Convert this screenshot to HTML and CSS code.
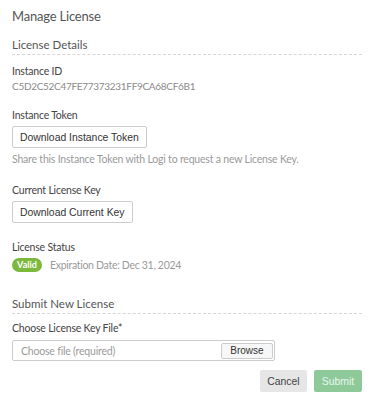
FILE: index.html
```html
<!DOCTYPE html>
<html>
<head>
<meta charset="utf-8">
<link rel="stylesheet" href="styles.css">
</head>
<body>
<div class="panel">
  <h1 class="title">Manage License</h1>
  <h2 class="section">License Details</h2>
  <div class="label label-first">Instance ID</div>
  <div class="value">C5D2C52C47FE77373231FF9CA68CF6B1</div>

  <div class="label label-token">Instance Token</div>
  <button class="btn">Download Instance Token</button>
  <div class="help">Share this Instance Token with Logi to request a new License Key.</div>

  <div class="label label-key">Current License Key</div>
  <button class="btn">Download Current Key</button>

  <div class="label label-status">License Status</div>
  <div class="status">
    <span class="badge">Valid</span>
    <span class="expiry">Expiration Date: Dec 31, 2024</span>
  </div>

  <h2 class="section section-second">Submit New License</h2>
  <div class="label label-file">Choose License Key File*</div>
  <div class="file">
    <span class="placeholder">Choose file (required)</span>
    <button class="browse">Browse</button>
  </div>
  <div class="actions">
    <button class="btn-cancel">Cancel</button>
    <button class="btn-submit">Submit</button>
  </div>
</div>
</body>
</html>
```

FILE: styles.css
```css
html, body {
  margin: 0;
  padding: 0;
  background: #ffffff;
}
body {
  font-family: Lato, "Open Sans", sans-serif;
  color: #555;
}
.panel {
  width: 350px;
  padding: 7px 12px 0 12px;
}
.title {
  margin: 0;
  font-size: 13px;
  font-weight: normal;
  color: #555;
  line-height: 18px;
  letter-spacing: -0.2px;
}
.section {
  margin: 13px 0 0 0;
  font-size: 11.5px;
  font-weight: normal;
  color: #555;
  line-height: 14px;
  padding-bottom: 2px;
  border-bottom: 1px dashed #d6d6d6;
}
.section-second {
  margin-top: 25px;
}
.label {
  font-size: 10.5px;
  letter-spacing: -0.2px;
  color: #444;
  line-height: 13px;
}
.label-first { margin-top: 10px; }
.label-token { margin-top: 16px; }
.label-key { margin-top: 18px; }
.label-status { margin-top: 18px; }
.label-file { margin-top: 8px; }
.value {
  font-size: 10px;
  color: #8a8a8a;
  line-height: 13px;
  margin-top: 2px;
  letter-spacing: -0.3px;
}
.btn {
  margin-top: 4px;
  font-family: "Liberation Sans", Arial, sans-serif;
  font-size: 10.4px;
  color: #333;
  background: #fff;
  border: 1px solid #ccc;
  border-radius: 2px;
  height: 22px;
  padding: 0 7px;
  display: block;
}
.help {
  margin-top: 5px;
  font-size: 10.5px;
  letter-spacing: -0.2px;
  color: #9a9a9a;
  line-height: 13px;
}
.status {
  margin-top: 4px;
  display: flex;
  align-items: center;
  gap: 8px;
  height: 14px;
}
.badge {
  background: #7cb83b;
  color: #fff;
  font-size: 9px;
  font-weight: bold;
  border-radius: 7px;
  padding: 0 5px;
  height: 14px;
  line-height: 14px;
  width: 20px;
  text-align: center;
}
.expiry {
  font-size: 10.5px;
  color: #9a9a9a;
  letter-spacing: -0.3px;
}
.file {
  box-sizing: border-box;
  margin-top: 5px;
  width: 263px;
  height: 21px;
  border: 1px solid #ccc;
  border-radius: 2px;
  display: flex;
  align-items: center;
  justify-content: space-between;
  padding: 0 1px 0 8px;
}
.placeholder {
  font-size: 10.5px;
  letter-spacing: -0.2px;
  color: #9a9a9a;
}
.browse {
  font-family: "Liberation Sans", Arial, sans-serif;
  font-size: 10px;
  color: #333;
  background: #f7f7f7;
  border: 1px solid #ccc;
  border-radius: 2px;
  height: 16px;
  width: 52px;
  padding: 0;
}
.actions {
  margin-top: 9px;
  display: flex;
  justify-content: flex-end;
  gap: 7px;
}
.btn-cancel, .btn-submit {
  font-family: "Liberation Sans", Arial, sans-serif;
  font-size: 10.4px;
  border: none;
  border-radius: 2px;
  height: 22px;
  padding: 0;
}
.btn-cancel {
  width: 47px;
  background: #e6e6e6;
  color: #444;
}
.btn-submit {
  width: 48px;
  background: #8ec99a;
  color: #e9f6ec;
}
```
